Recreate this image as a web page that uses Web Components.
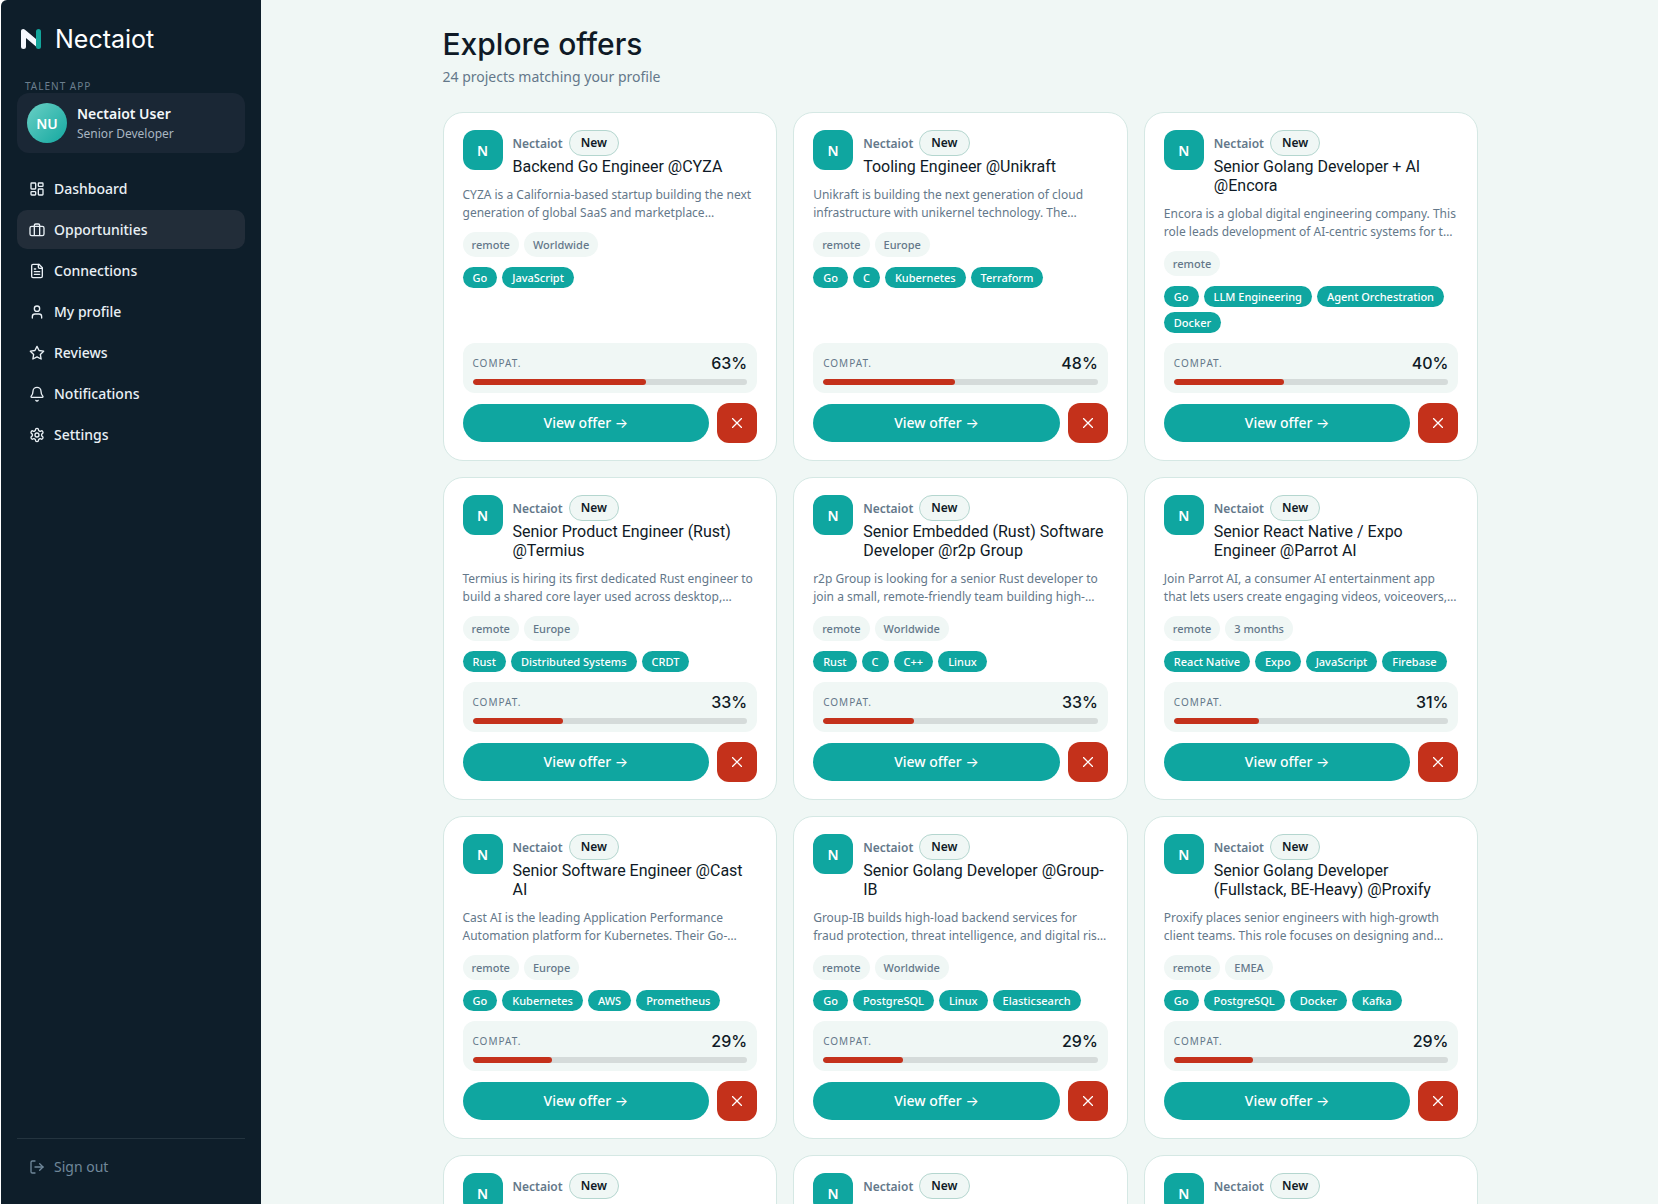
<!DOCTYPE html>
<html lang="en">
<head>
<meta charset="UTF-8">
<meta name="viewport" content="width=device-width, initial-scale=1.0">
<title>Nectaiot - Explore offers</title>
<style>
    :root {
        --ink: #0f1a26;
        --muted: #64788a;
        --teal: #0fa6a0;
        --red: #c4311b;
        --mist: #f0f7f5;
        --line: #d5e8e4;
        --display: "Inter", "Noto Sans", sans-serif;
    }
    * { box-sizing: border-box; }
    body {
        margin: 0;
        padding-left: 1px;
        background: #fff;
        color: var(--ink);
        font-family: "Noto Sans", "Open Sans", sans-serif;
        font-size: 14px;
    }
</style>
</head>
<body>
<app-shell>
    <app-sidebar slot="sidebar">
        <user-card slot="user" initials="NU" name="Nectaiot User" role-title="Senior Developer"></user-card>
        <nav-item icon="dashboard">Dashboard</nav-item>
        <nav-item icon="briefcase" active>Opportunities</nav-item>
        <nav-item icon="file">Connections</nav-item>
        <nav-item icon="user">My profile</nav-item>
        <nav-item icon="star">Reviews</nav-item>
        <nav-item icon="bell">Notifications</nav-item>
        <nav-item icon="gear">Settings</nav-item>
        <nav-item slot="footer" icon="logout" quiet>Sign out</nav-item>
    </app-sidebar>
    <offer-list heading="Explore offers" subtitle="24 projects matching your profile"></offer-list>
</app-shell>

<script>
const ICONS = {
    dashboard: '<rect x="3" y="3" width="7" height="9" rx="1"/><rect x="14" y="3" width="7" height="5" rx="1"/><rect x="14" y="12" width="7" height="9" rx="1"/><rect x="3" y="16" width="7" height="5" rx="1"/>',
    briefcase: '<path d="M16 20V5a2 2 0 0 0-2-2h-4a2 2 0 0 0-2 2v15"/><rect x="1.500" y="6.500" width="21" height="14" rx="2.500"/>',
    file: '<path d="M15 2H6a2 2 0 0 0-2 2v16a2 2 0 0 0 2 2h12a2 2 0 0 0 2-2V7Z"/><path d="M14 2v4a2 2 0 0 0 2 2h4"/><path d="M10 9H8"/><path d="M16 13H8"/><path d="M16 17H8"/>',
    user: '<path d="M19 21v-2a4 4 0 0 0-4-4H9a4 4 0 0 0-4 4v2"/><circle cx="12" cy="7" r="4"/>',
    star: '<path d="M12 2l3.090 6.260L22 9.270l-5 4.870 1.180 6.880L12 17.770l-6.180 3.250L7 14.140 2 9.270l6.910-1.010z"/>',
    bell: '<path d="M10.300 21.500a2 2 0 0 0 3.400 0"/><path d="M3.300 15.300A1 1 0 0 0 4 17h16a1 1 0 0 0 .740-1.670C19.400 13.960 18 12.500 18 8A6 6 0 0 0 6 8c0 4.500-1.410 5.960-2.740 7.330"/>',
    gear: '<path d="M12.220 2h-.44a2 2 0 0 0-2 2v.18a2 2 0 0 1-1 1.730l-.43.25a2 2 0 0 1-2 0l-.15-.08a2 2 0 0 0-2.730.73l-.22.38a2 2 0 0 0 .73 2.730l.15.1a2 2 0 0 1 1 1.720v.51a2 2 0 0 1-1 1.740l-.15.09a2 2 0 0 0-.73 2.730l.22.38a2 2 0 0 0 2.730.73l.15-.08a2 2 0 0 1 2 0l.43.25a2 2 0 0 1 1 1.730V20a2 2 0 0 0 2 2h.44a2 2 0 0 0 2-2v-.18a2 2 0 0 1 1-1.730l.43-.25a2 2 0 0 1 2 0l.15.08a2 2 0 0 0 2.730-.73l.22-.39a2 2 0 0 0-.73-2.730l-.15-.08a2 2 0 0 1-1-1.740v-.5a2 2 0 0 1 1-1.740l.15-.09a2 2 0 0 0 .73-2.730l-.22-.38a2 2 0 0 0-2.730-.73l-.15.08a2 2 0 0 1-2 0l-.43-.25a2 2 0 0 1-1-1.730V4a2 2 0 0 0-2-2z"/><circle cx="12" cy="12" r="3"/>',
    logout: '<path d="M9 21H5a2 2 0 0 1-2-2V5a2 2 0 0 1 2-2h4"/><path d="M16 17l5-5-5-5"/><path d="M21 12H9"/>'
};

const OFFERS = [
    { title: 'Backend Go Engineer @CYZA', text: 'CYZA is a California-based startup building the next generation of global SaaS and marketplace…', tags: ['remote', 'Worldwide'], skills: ['Go', 'JavaScript'], score: 63 },
    { title: 'Tooling Engineer @Unikraft', text: 'Unikraft is building the next generation of cloud infrastructure with unikernel technology. The…', tags: ['remote', 'Europe'], skills: ['Go', 'C', 'Kubernetes', 'Terraform'], score: 48 },
    { title: 'Senior Golang Developer + AI @Encora', text: 'Encora is a global digital engineering company. This role leads development of AI-centric systems for t…', tags: ['remote'], skills: ['Go', 'LLM Engineering', 'Agent Orchestration', 'Docker'], score: 40 },
    { title: 'Senior Product Engineer (Rust) @Termius', text: 'Termius is hiring its first dedicated Rust engineer to build a shared core layer used across desktop,…', tags: ['remote', 'Europe'], skills: ['Rust', 'Distributed Systems', 'CRDT'], score: 33 },
    { title: 'Senior Embedded (Rust) Software Developer @r2p Group', text: 'r2p Group is looking for a senior Rust developer to join a small, remote-friendly team building high-…', tags: ['remote', 'Worldwide'], skills: ['Rust', 'C', 'C++', 'Linux'], score: 33 },
    { title: 'Senior React Native / Expo Engineer @Parrot AI', text: 'Join Parrot AI, a consumer AI entertainment app that lets users create engaging videos, voiceovers,…', tags: ['remote', '3 months'], skills: ['React Native', 'Expo', 'JavaScript', 'Firebase'], score: 31 },
    { title: 'Senior Software Engineer @Cast AI', text: 'Cast AI is the leading Application Performance Automation platform for Kubernetes. Their Go-…', tags: ['remote', 'Europe'], skills: ['Go', 'Kubernetes', 'AWS', 'Prometheus'], score: 29 },
    { title: 'Senior Golang Developer @Group-IB', text: 'Group-IB builds high-load backend services for fraud protection, threat intelligence, and digital ris…', tags: ['remote', 'Worldwide'], skills: ['Go', 'PostgreSQL', 'Linux', 'Elasticsearch'], score: 29 },
    { title: 'Senior Golang Developer (Fullstack, BE-Heavy) @Proxify', text: 'Proxify places senior engineers with high-growth client teams. This role focuses on designing and…', tags: ['remote', 'EMEA'], skills: ['Go', 'PostgreSQL', 'Docker', 'Kafka'], score: 29 },
    {}, {}, {}
];

class AppShell extends HTMLElement {
    constructor() {
        super();
        this.attachShadow({ mode: 'open' });
    }

    connectedCallback() {
        this.shadowRoot.innerHTML = `
            <style>
                :host {
                    display: grid;
                    grid-template-columns: 260px 1fr;
                    height: 100vh;
                    overflow: hidden;
                    background: var(--mist);
                    border-top-left-radius: 6px;
                }
                main {
                    overflow-y: auto;
                    scrollbar-width: none;
                    padding: 24px 32px 32px 34px;
                }
            </style>
            <slot name="sidebar"></slot>
            <main><slot></slot></main>
        `;
    }
}

class AppSidebar extends HTMLElement {
    constructor() {
        super();
        this.attachShadow({ mode: 'open' });
    }

    connectedCallback() {
        this.shadowRoot.innerHTML = `
            <style>
                :host {
                    display: flex;
                    flex-direction: column;
                    padding: 24px 16px 18px;
                    box-sizing: border-box;
                    background: #0e1e2a;
                    color: #eef4f8;
                }
                .brand {
                    display: flex;
                    align-items: center;
                    gap: 14px;
                    height: 30px;
                    padding-left: 4px;
                    font-family: var(--display);
                    font-size: 25px;
                    color: #fff;
                    text-decoration: none;
                }
                .brand svg { width: 20px; height: 20px; }
                .label {
                    margin: 25px 0 0 8px;
                    font-size: 10px;
                    line-height: 14px;
                    letter-spacing: 1px;
                    color: #6c7f8e;
                }
                nav {
                    display: flex;
                    flex-direction: column;
                    gap: 2px;
                    margin-top: 16px;
                }
                footer {
                    margin-top: auto;
                    padding-top: 8px;
                    border-top: 1px solid #24343f;
                }
            </style>
            <a class="brand" href="#">
                <svg viewBox="0 0 20 20" aria-hidden="true">
                    <path d="M17.500 2.500v15" stroke="#12a59b" stroke-width="5" stroke-linecap="round"/>
                    <path d="M0 2.300C0 .1 2.400 -.7 4 .7L15 10V17.500L5 9V17.500a2.500 2.500 0 0 1-5 0Z" fill="#f4f7fd"/>
                </svg>
                <span>Nectaiot</span>
            </a>
            <div class="label">TALENT APP</div>
            <slot name="user"></slot>
            <nav><slot></slot></nav>
            <footer><slot name="footer"></slot></footer>
        `;
    }
}

class UserCard extends HTMLElement {
    constructor() {
        super();
        this.attachShadow({ mode: 'open' });
    }

    connectedCallback() {
        this.shadowRoot.innerHTML = `
            <style>
                :host {
                    display: flex;
                    align-items: center;
                    gap: 10px;
                    padding: 10px;
                    border-radius: 12px;
                    background: #1a2735;
                }
                .avatar {
                    display: flex;
                    align-items: center;
                    justify-content: center;
                    width: 40px;
                    height: 40px;
                    border-radius: 50%;
                    background: linear-gradient(135deg, #6ad0c5, #14a8a0);
                    color: #fff;
                    font-weight: 600;
                }
                .name {
                    font-weight: 600;
                    line-height: 20px;
                    color: #f3f7fa;
                }
                .role {
                    font-size: 12px;
                    line-height: 19px;
                    color: #a9b6c1;
                }
            </style>
            <div class="avatar">${this.getAttribute('initials')}</div>
            <div>
                <div class="name">${this.getAttribute('name')}</div>
                <div class="role">${this.getAttribute('role-title')}</div>
            </div>
        `;
    }
}

class NavItem extends HTMLElement {
    constructor() {
        super();
        this.attachShadow({ mode: 'open' });
    }

    connectedCallback() {
        const quiet = this.hasAttribute('quiet');
        const tag = quiet ? 'button type="button"' : 'a href="#"';
        this.shadowRoot.innerHTML = `
            <style>
                :host { display: block; }
                a, button {
                    display: flex;
                    align-items: center;
                    gap: 9px;
                    width: 100%;
                    height: 39px;
                    padding: 0 12px;
                    box-sizing: border-box;
                    border: 0;
                    border-radius: 10px;
                    background: none;
                    color: #e9f0f5;
                    font: inherit;
                    font-weight: 500;
                    text-decoration: none;
                    cursor: pointer;
                }
                button {
                    color: #70889a;
                    font-weight: 400;
                }
                a:hover, :host([active]) a { background: #222d39; }
                svg { width: 16px; height: 16px; }
            </style>
            <${tag}>
                <svg viewBox="0 0 24 24" fill="none" stroke="currentColor" stroke-width="2" stroke-linecap="round" stroke-linejoin="round" aria-hidden="true">${ICONS[this.getAttribute('icon')]}</svg>
                <span><slot></slot></span>
            </${quiet ? 'button' : 'a'}>
        `;
    }
}

class CompatMeter extends HTMLElement {
    constructor() {
        super();
        this.attachShadow({ mode: 'open' });
    }

    connectedCallback() {
        const value = this.getAttribute('value');
        this.shadowRoot.innerHTML = `
            <style>
                :host {
                    display: block;
                    padding: 10px 10px 8px;
                    border-radius: 12px;
                    background: var(--mist);
                }
                .row {
                    display: flex;
                    align-items: center;
                    justify-content: space-between;
                    height: 20px;
                }
                .label {
                    font-size: 10px;
                    letter-spacing: 1px;
                    color: var(--muted);
                }
                .value {
                    font-family: var(--display);
                    font-size: 16px;
                    font-weight: 500;
                }
                .track {
                    height: 6px;
                    margin-top: 6px;
                    border-radius: 3px;
                    background: #d5dbda;
                    overflow: hidden;
                }
                .fill {
                    width: ${value}%;
                    height: 100%;
                    border-radius: 3px;
                    background: var(--red);
                }
            </style>
            <div class="row">
                <span class="label">COMPAT.</span>
                <span class="value">${value}%</span>
            </div>
            <div class="track"><div class="fill"></div></div>
        `;
    }
}

class OfferCard extends HTMLElement {
    constructor() {
        super();
        this.attachShadow({ mode: 'open' });
    }

    connectedCallback() {
        const { title, text, tags, skills, score } = this.offer;

        this.shadowRoot.innerHTML = `
            <style>
                :host {
                    display: flex;
                    flex-direction: column;
                    gap: 10px;
                    min-height: 323px;
                    padding: 17px 19px;
                    box-sizing: border-box;
                    border: 1px solid var(--line);
                    border-radius: 20px;
                    background: #fff;
                }
                header {
                    display: flex;
                    gap: 10px;
                }
                .logo {
                    display: flex;
                    flex: none;
                    align-items: center;
                    justify-content: center;
                    width: 40px;
                    height: 40px;
                    border-radius: 12px;
                    background: var(--teal);
                    color: #fff;
                    font-weight: 600;
                }
                .company {
                    display: flex;
                    align-items: center;
                    gap: 6px;
                    height: 26px;
                    font-size: 12px;
                    font-weight: 600;
                    color: var(--muted);
                }
                .new {
                    padding: 0 11px;
                    border: 1px solid #b4d6cf;
                    border-radius: 13px;
                    background: var(--mist);
                    color: var(--ink);
                    line-height: 24px;
                }
                h2 {
                    margin: 1px 0 0;
                    font-family: "Roboto", sans-serif;
                    font-size: 16px;
                    font-weight: 400;
                    line-height: 19px;
                }
                p {
                    margin: 0;
                    font-size: 12px;
                    line-height: 18px;
                    color: var(--muted);
                }
                ul {
                    display: flex;
                    flex-wrap: wrap;
                    gap: 5px;
                    margin: 0;
                    padding: 0;
                    list-style: none;
                    font-size: 11px;
                    font-weight: 500;
                }
                .tags li {
                    padding: 0 9px;
                    border-radius: 13px;
                    background: var(--mist);
                    color: var(--muted);
                    line-height: 25px;
                }
                .skills li {
                    padding: 0 10px;
                    border-radius: 11px;
                    background: var(--teal);
                    color: #fff;
                    line-height: 21px;
                }
                compat-meter { margin-top: auto; }
                .actions {
                    display: flex;
                    align-items: center;
                    gap: 8px;
                }
                .view {
                    flex: 1;
                    height: 38px;
                    border-radius: 19px;
                    background: var(--teal);
                    color: #fff;
                    font-weight: 500;
                    line-height: 38px;
                    text-align: center;
                    text-decoration: none;
                }
                .arrow { font-family: "Inter", sans-serif; font-weight: 400; }
                .dismiss {
                    display: flex;
                    align-items: center;
                    justify-content: center;
                    width: 40px;
                    height: 40px;
                    padding: 0;
                    border: 0;
                    border-radius: 12px;
                    background: var(--red);
                    cursor: pointer;
                }
                .dismiss svg { width: 10px; height: 10px; }
            </style>
            <header>
                <div class="logo">N</div>
                <div>
                    <div class="company">Nectaiot <span class="new">New</span></div>
                    ${title ? `<h2>${title}</h2>` : ''}
                </div>
            </header>
            ${title ? `
            <p>${text}</p>
            <ul class="tags">${tags.map(t => `<li>${t}</li>`).join('')}</ul>
            <ul class="skills">${skills.map(s => `<li>${s}</li>`).join('')}</ul>
            <compat-meter value="${score}"></compat-meter>
            <div class="actions">
                <a class="view" href="#">View offer <span class="arrow">→</span></a>
                <button class="dismiss" type="button" aria-label="Dismiss offer">
                    <svg viewBox="0 0 10 10" fill="none" stroke="#fff" stroke-width="1.300" aria-hidden="true"><path d="M0 0l10 10M10 0L0 10"/></svg>
                </button>
            </div>` : ''}
        `;
    }
}

class OfferList extends HTMLElement {
    constructor() {
        super();
        this.attachShadow({ mode: 'open' });
    }

    connectedCallback() {
        this.shadowRoot.innerHTML = `
            <style>
                :host {
                    display: block;
                    max-width: 1036px;
                    margin: 0 auto;
                }
                h1 {
                    margin: 0;
                    font-family: var(--display);
                    font-size: 30px;
                    font-weight: 500;
                    line-height: 40px;
                }
                p {
                    margin: 2px 0 0;
                    line-height: 22px;
                    color: var(--muted);
                }
                .grid {
                    display: grid;
                    grid-template-columns: repeat(3, 1fr);
                    gap: 16px;
                    margin-top: 24px;
                }
            </style>
            <h1>${this.getAttribute('heading')}</h1>
            <p>${this.getAttribute('subtitle')}</p>
            <div class="grid"></div>
        `;

        const grid = this.shadowRoot.querySelector('.grid');
        OFFERS.forEach(offer => {
            const card = document.createElement('offer-card');
            card.offer = offer;
            grid.appendChild(card);
        });
    }
}

customElements.define('app-shell', AppShell);
customElements.define('app-sidebar', AppSidebar);
customElements.define('user-card', UserCard);
customElements.define('nav-item', NavItem);
customElements.define('compat-meter', CompatMeter);
customElements.define('offer-card', OfferCard);
customElements.define('offer-list', OfferList);
</script>
</body>
</html>
